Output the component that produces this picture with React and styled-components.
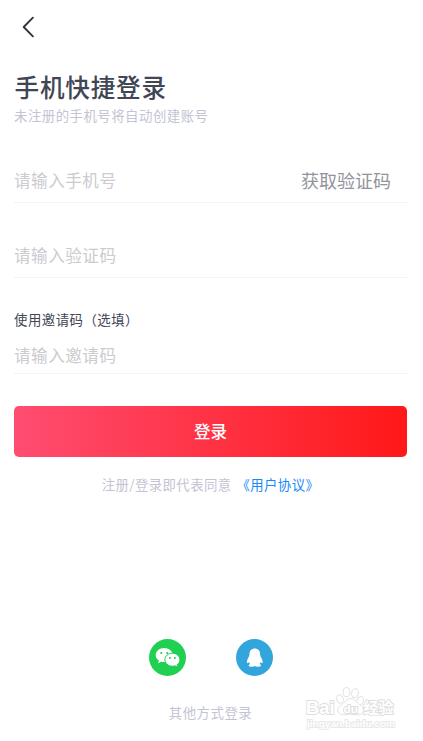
import { useState } from "react";
import styled, { createGlobalStyle } from "styled-components";

const GlobalStyle = createGlobalStyle`
* {
  box-sizing: border-box;
}

body {
  margin: 0;
  background: #ffffff;
  font-family: "Noto Sans CJK SC", sans-serif;
}
`;

export function Login() {

    const [phone, setPhone] = useState("");
    const [code, setCode] = useState("");
    const [invite, setInvite] = useState("");

    return (
        <>
        <GlobalStyle />

        <SPage>

            <SHeader>
                <SBack aria-label="返回">
                    <svg width="14" height="22" viewBox="0 0 14 22" fill="none">
                        <path d="M11.9 1.7 L2.7 11 L11.9 20.3" stroke="#31343d" strokeWidth="1.9" strokeLinecap="round" strokeLinejoin="round" />
                    </svg>
                </SBack>
            </SHeader>

            <STitle>手机快捷登录</STitle>
            <SSubtitle>未注册的手机号将自动创建账号</SSubtitle>

            <SField $top={35} $height={43}>
                <SInput placeholder="请输入手机号" value={phone} onChange={(e) => setPhone(e.target.value)} />
                <SCodeButton>获取验证码</SCodeButton>
            </SField>

            <SField $top={32} $height={42.5}>
                <SInput placeholder="请输入验证码" value={code} onChange={(e) => setCode(e.target.value)} />
            </SField>

            <SLabel>使用邀请码（选填）</SLabel>

            <SField $top={6} $height={39}>
                <SInput placeholder="请输入邀请码" value={invite} onChange={(e) => setInvite(e.target.value)} />
            </SField>

            <SSubmit>登录</SSubmit>

            <SAgreement>
                <span>注册/登录即代表同意</span>
                <a>《用户协议》</a>
            </SAgreement>

            <SFooter>
                <SSocials>
                    <SSocial $color="#1fd052" aria-label="微信">
                        <svg width="37" height="37" viewBox="0 0 37 37">
                            <path fill="#fff" d="M15.2 9c-4.800 0-8.500 3.200-8.500 7.100 0 2.300 1.200 4.200 3.200 5.500l-.8 2.700 3.100-1.600c1 .3 2 .4 3 .4 4.700 0 8.500-3.100 8.500-7S19.900 9 15.200 9z" />
                            <path fill="#fff" stroke="#1fd052" strokeWidth="1" d="M23.400 14.200c-4.200 0-7.500 2.900-7.500 6.500s3.300 6.500 7.500 6.500c.8 0 1.700-.1 2.500-.4l2.900 1.500-.7-2.500c1.700-1.200 2.800-3 2.800-5.100 0-3.600-3.300-6.500-7.500-6.500z" />
                            <circle cx="12.300" cy="14" r="1.100" fill="#1fd052" />
                            <circle cx="18.200" cy="14" r="1.100" fill="#1fd052" />
                            <circle cx="20.900" cy="19" r="1" fill="#1fd052" />
                            <circle cx="25.900" cy="19" r="1" fill="#1fd052" />
                        </svg>
                    </SSocial>
                    <SSocial $color="#33a5dd" aria-label="QQ">
                        <svg width="37" height="37" viewBox="0 0 37 37">
                            <path fill="#fff" d="M18.800 9.600c-3.200 0-5.300 2.300-5.300 5.500 0 1-.1 1.500-.5 2.300-1 1.700-2 3.700-2.100 5.200 0 1.100.3 1.600.7 1.600.5 0 1-.6 1.400-1.100.2.900.6 1.500 1.200 2-1 .3-1.500.8-1.500 1.300 0 1 1.500 1.400 3.200 1.400 1.300 0 2.300-.3 2.900-.8.600.5 1.600.8 2.900.8 1.700 0 3.200-.4 3.200-1.400 0-.5-.5-1-1.500-1.300.6-.5 1-1.100 1.200-2 .4.500.9 1.100 1.400 1.100.4 0 .7-.5.7-1.600-.1-1.500-1.100-3.500-2.100-5.200-.4-.8-.5-1.300-.5-2.300 0-3.200-2.100-5.500-5.300-5.500z" />
                        </svg>
                    </SSocial>
                </SSocials>
                <SOther>其他方式登录</SOther>
            </SFooter>

            <Watermark />

        </SPage>
        </>
    );
}

function Watermark() {
    return (
        <SWatermark width="96" height="46" viewBox="0 0 96 46" aria-hidden="true">
            <g fill="#fff" stroke="#e2e2e2" strokeWidth="1">
                <ellipse cx="37" cy="14" rx="3.300" ry="4.300" transform="rotate(-18 37 14)" />
                <ellipse cx="43.500" cy="7.200" rx="3.400" ry="4.600" />
                <ellipse cx="52" cy="8.200" rx="3.400" ry="4.500" transform="rotate(12 52 8.200)" />
                <ellipse cx="57.300" cy="15.600" rx="3.200" ry="4.200" transform="rotate(20 57.300 15.600)" />
                <path d="M47.500 13.500c-3.500 0-4.800 2.600-6.800 4.700-2.300 2.300-6 3.600-6 6.800 0 3 2.700 4.800 6.500 4.800 2.200 0 4-.5 6.300-.5s4.400.5 6.600.5c4 0 6.600-2 6.600-4.800 0-3.200-3.800-4.800-6-7-2.100-2.200-3.500-4.500-7.200-4.500z" />
            </g>
            <SMark x="3" y="29" $size={18} textLength="28.500" lengthAdjust="spacingAndGlyphs">Bai</SMark>
            <SMark x="40.500" y="27.600" $size={11.5} textLength="14.500" lengthAdjust="spacingAndGlyphs">du</SMark>
            <SMark x="60.500" y="28" $size={15} $cjk textLength="30" lengthAdjust="spacingAndGlyphs">经验</SMark>
            <SMark x="4" y="41.500" $size={9.5} $soft textLength="88" lengthAdjust="spacingAndGlyphs">jingyan.baidu.com</SMark>
        </SWatermark>
    );
}

export default Login;


// =========================== STYLES ============================= //

const SPage = styled.main`
display: flex;
flex-direction: column;
position: relative;
height: 741px;
padding: 0 16px 0 14px;
overflow: hidden;
`;

const SHeader = styled.header`
display: flex;
align-items: center;
height: 53px;
padding-left: 7px;
`;

const SBack = styled.button`
display: flex;
padding: 0;
border: none;
background: none;
`;

const STitle = styled.h1`
margin: 18px 0 0;
padding-left: 0.5px;
color: #414654;
font-size: 24.6px;
font-weight: 500;
letter-spacing: 0.8px;
line-height: 30px;
`;

const SSubtitle = styled.p`
margin: 4px 0 0;
color: #c3c4d3;
font-size: 13.4px;
letter-spacing: 0.5px;
line-height: 20px;
`;

const SField = styled.div`
display: flex;
justify-content: space-between;
align-items: flex-start;
height: ${(props) => props.$height}px;
margin-top: ${(props) => props.$top}px;
padding-right: 16px;
border-bottom: 1px solid #f3f3f5;
`;

const SInput = styled.input`
flex: 1;
min-width: 0;
height: 40px;
padding: 0;
border: none;
outline: none;
background: none;
color: #414654;
font-family: inherit;
font-size: 16.6px;
letter-spacing: 0.5px;

&::placeholder {
  color: #cbcbd0;
}
`;

const SCodeButton = styled.button`
height: 40px;
padding: 0;
border: none;
background: none;
color: #92949d;
font-family: inherit;
font-size: 18px;
`;

const SLabel = styled.p`
margin: 31px 0 0;
color: #414654;
font-size: 13.4px;
letter-spacing: 0.5px;
line-height: 20px;
`;

const SSubmit = styled.button`
height: 51px;
margin-top: 32px;
padding: 0;
border: none;
border-radius: 5px;
background: linear-gradient(90deg, #ff4d71, #ff1818);
color: #ffffff;
font-family: inherit;
font-size: 16.5px;
font-weight: 500;
`;

const SAgreement = styled.div`
display: flex;
justify-content: center;
gap: 5px;
margin-top: 18px;
color: #c3c4d3;
font-size: 13.4px;
letter-spacing: 0.4px;
line-height: 19px;

& a {
  color: #1989fa;
}
`;

const SFooter = styled.footer`
display: flex;
flex-direction: column;
align-items: center;
margin-top: auto;
padding-bottom: 19px;
`;

const SSocials = styled.div`
display: flex;
gap: 50px;
`;

const SSocial = styled.button`
display: flex;
width: 37px;
height: 37px;
padding: 0;
border: none;
border-radius: 50%;
background: ${(props) => props.$color};
`;

const SOther = styled.p`
margin: 26px 0 0;
color: #c3c4d3;
font-size: 13.4px;
letter-spacing: 0.5px;
line-height: 20px;
`;

const SWatermark = styled.svg`
position: absolute;
left: 303px;
top: 685px;
`;

const SMark = styled.text`
fill: #ffffff;
stroke: ${(props) => props.$soft ? "#e9e9e9" : "#dedede"};
stroke-width: 1.8px;
paint-order: stroke;
font-family: ${(props) => props.$cjk ? '"Noto Sans CJK SC"' : '"Liberation Sans"'}, sans-serif;
font-size: ${(props) => props.$size}px;
font-weight: bold;
`;
